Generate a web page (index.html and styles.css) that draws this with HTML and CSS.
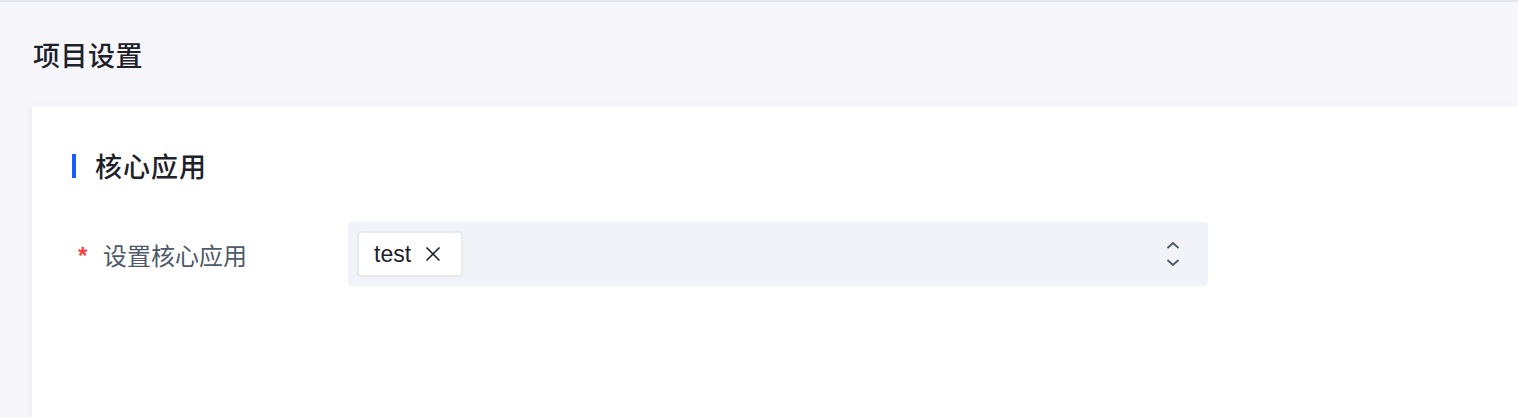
FILE: index.html
```html
<!DOCTYPE html>
<html lang="zh-CN">
<head>
    <meta charset="UTF-8">
    <meta name="viewport" content="width=device-width, initial-scale=1.0">
    <title>项目设置</title>
    <link rel="stylesheet" href="styles.css">
</head>
<body>
    <div class="topline"></div>
    <div class="page-header">
        <h1>项目设置</h1>
    </div>

    <div class="card">
        <h2 class="section-title">核心应用</h2>
        <div class="form-row">
            <label class="form-label"><span class="required">*</span>设置核心应用</label>
            <div class="select">
                <div class="tags">
                    <span class="tag">test
                        <svg class="tag-close" width="16" height="16" viewBox="0 0 16 16">
                            <path d="M1.5 1.5 L14.5 14.5 M14.5 1.5 L1.5 14.5" stroke="#1d2129" stroke-width="1.6" fill="none"/>
                        </svg>
                    </span>
                </div>
                <svg class="arrows" width="14" height="28" viewBox="0 0 14 28">
                    <path d="M1.5 8 L7 3 L12.5 8" stroke="#4e5969" stroke-width="1.8" fill="none"/>
                    <path d="M1.5 20 L7 25 L12.5 20" stroke="#4e5969" stroke-width="1.8" fill="none"/>
                </svg>
            </div>
        </div>
    </div>
</body>
</html>
```

FILE: styles.css
```css
body {
    margin: 0;
    padding: 0;
    background-color: #f7f7fb;
    font-family: "Liberation Sans", "Noto Sans CJK SC", sans-serif;
    color: #1d2129;
    height: 418px;
    overflow: hidden;
}
.topline {
    height: 2px;
    background-color: #e5e6eb;
}
.page-header {
    height: 104px;
    padding-left: 33px;
    display: flex;
    align-items: center;
}
.page-header h1 {
    margin: 0;
    padding-top: 2px;
    font-size: 27px;
    line-height: 36px;
    font-weight: 500;
    letter-spacing: 0.5px;
    font-family: "Noto Sans CJK SC", sans-serif;
}
.card {
    margin-left: 32px;
    height: 312px;
    box-sizing: border-box;
    background-color: #fff;
    padding: 42px 40px 0 40px;
    box-shadow: -2px 0 6px rgba(0, 0, 0, 0.04);
}
.section-title {
    margin: 0;
    display: flex;
    align-items: center;
    font-size: 27px;
    line-height: 36px;
    font-weight: 500;
    letter-spacing: 1px;
    font-family: "Noto Sans CJK SC", sans-serif;
}
.section-title::before {
    content: "";
    width: 4px;
    height: 24px;
    background-color: #165dff;
    margin-right: 19px;
}
.form-row {
    display: flex;
    align-items: center;
    margin-top: 38px;
}
.form-label {
    width: 276px;
    display: flex;
    align-items: center;
    font-size: 24px;
    color: #4e5969;
    font-family: "Noto Sans CJK SC", sans-serif;
}
.required {
    color: #f53f3f;
    font-size: 24px;
    width: 25px;
    margin-left: 6px;
    font-family: "Liberation Sans", sans-serif;
    font-weight: bold;
    padding-top: 4px;
}
.select {
    width: 860px;
    height: 64px;
    box-sizing: border-box;
    background-color: #f2f3f8;
    border-radius: 4px;
    padding: 0 28px 0 9px;
    display: flex;
    align-items: center;
    justify-content: space-between;
}
.tag {
    display: flex;
    align-items: center;
    gap: 14px;
    height: 46px;
    box-sizing: border-box;
    padding: 0 20px 0 15px;
    background-color: #fff;
    border: 2px solid #e9eaef;
    border-radius: 4px;
    font-size: 23px;
    color: #1d2129;
}
```
